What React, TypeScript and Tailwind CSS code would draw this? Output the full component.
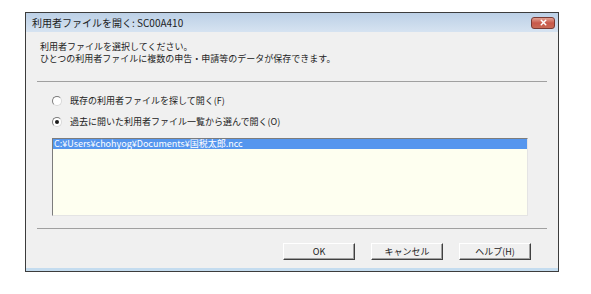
import { X } from 'lucide-react';

const JP = "font-['MS_UI_Gothic','Noto_Sans_CJK_JP',sans-serif]";

function Radio({ checked, label }: { checked?: boolean; label: string }) {
  return (
    <div className="flex h-[12px] items-center">
      <span className="ml-[26px] flex h-[10px] w-[10px] items-center justify-center rounded-full border border-t-[#7a7a7a] border-l-[#7a7a7a] border-r-[#d8d8d8] border-b-[#d8d8d8] bg-white">
        {checked && <span className="h-[4px] w-[4px] rounded-full bg-[#1a1a1a]" />}
      </span>
      <span className="ml-[8px] text-[9px] leading-[12px] text-[#222]">{label}</span>
    </div>
  );
}

function Btn({ label }: { label: string }) {
  return (
    <button className="flex h-[17px] w-[72px] items-center justify-center border border-t-[#ffffff] border-l-[#ffffff] border-r-[#404040] border-b-[#404040] bg-[#f0f0f0] text-[9px] leading-none text-[#222] shadow-[inset_-1px_-1px_0_#a0a0a0]">
      {label}
    </button>
  );
}

export default function App() {
  return (
    <div className={`h-[294px] w-[591px] overflow-hidden bg-white pt-[12px] pl-[25px] ${JP}`}>
      <div className="flex h-[260px] w-[534px] flex-col border border-[#3c3c3c] bg-[#f0f0f0]">
        {/* title bar */}
        <div className="flex h-[19px] items-center bg-gradient-to-b from-[#bcd0e6] to-[#d6e3f1] pl-[6px] pr-[3px]">
          <span className="text-[10px] leading-none text-[#1c1c1c]">利用者ファイルを開く: SC00A410</span>
          <span className="ml-auto flex h-[12px] w-[24px] items-center justify-center rounded-[3px] border border-[#7a3a34] bg-gradient-to-b from-[#e1a193] via-[#c8584a] to-[#c96a55]">
            <X className="h-[9px] w-[9px] text-white" strokeWidth={4} />
          </span>
        </div>

        <div className="flex flex-1 flex-col">
          <div className="ml-[14px] mt-[9px] text-[9px] leading-[12px] text-[#222]">
            <div>利用者ファイルを選択してください。</div>
            <div>ひとつの利用者ファイルに複数の申告・申請等のデータが保存できます。</div>
          </div>

          <div className="mx-[11px] mt-[16px] h-px bg-[#a0a0a0]" />

          <div className="mt-[13px] flex flex-col gap-[9px]">
            <Radio label="既存の利用者ファイルを探して開く(F)" />
            <Radio checked label="過去に開いた利用者ファイル一覧から選んで開く(O)" />
          </div>

          <div className="ml-[26px] mt-[10px] h-[78px] w-[476px] border border-t-[#7c7c7c] border-l-[#7c7c7c] border-r-[#e4e4e4] border-b-[#e4e4e4] bg-[#fefff0]">
            <div className="h-[10px] bg-[#5596ee] pl-[1px] text-[9px] leading-[10px] text-white">
              C:¥Users¥chohyog¥Documents¥国税太郎.ncc
            </div>
          </div>

          <div className="mx-[11px] mt-[12px] h-px bg-[#a0a0a0]" />

          <div className="mr-[27px] mt-[14px] flex justify-end gap-[16px]">
            <Btn label="OK" />
            <Btn label="キャンセル" />
            <Btn label="ヘルプ(H)" />
          </div>

          <div className="mt-auto h-[3px] bg-[#c4dcef]" />
        </div>
      </div>
    </div>
  );
}
